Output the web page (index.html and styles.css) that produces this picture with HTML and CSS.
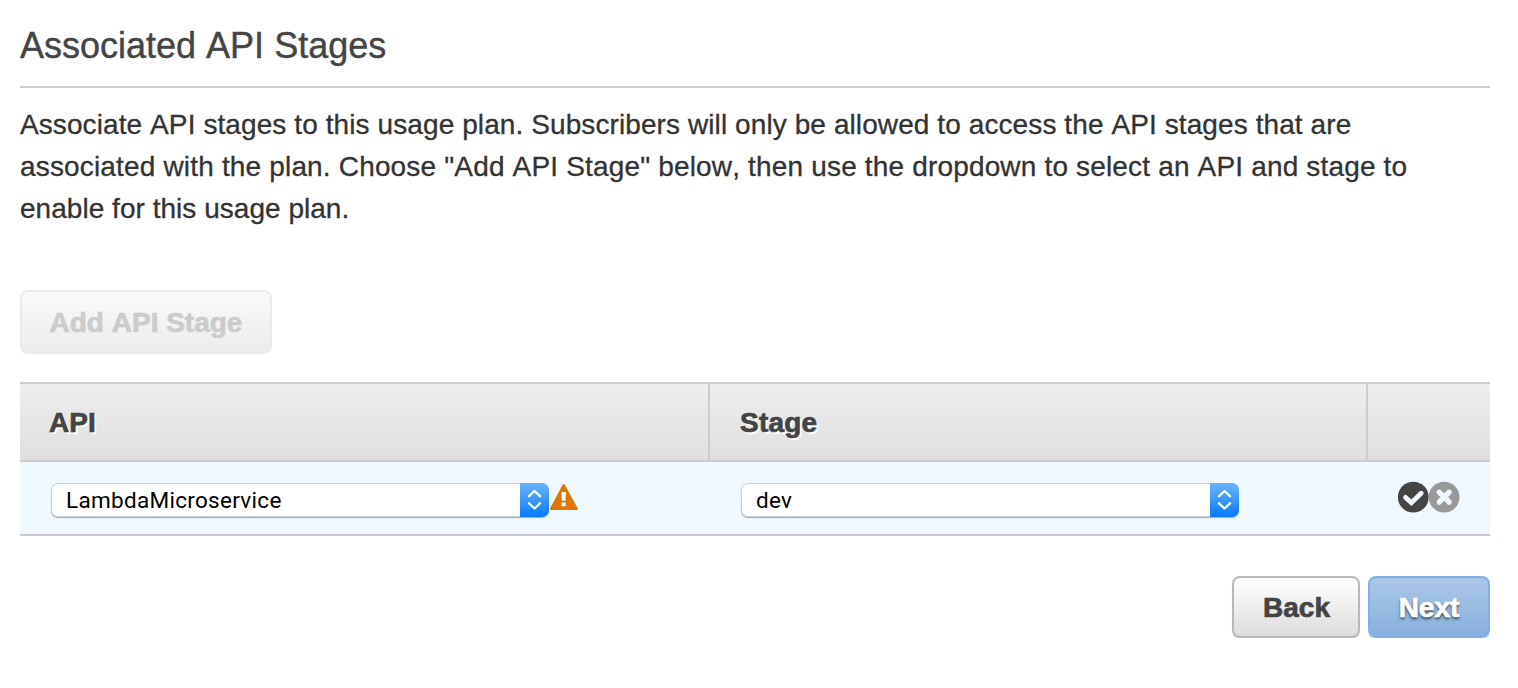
FILE: index.html
```html
<!DOCTYPE html>
<html lang="en">
<head>
<meta charset="utf-8">
<title>Associated API Stages</title>
<link rel="stylesheet" href="styles.css">
</head>
<body>
<main class="page">
  <h1 class="title">Associated API Stages</h1>
  <p class="intro"><span class="line-one">Associate API stages to this usage plan. Subscribers will only be allowed to access the API stages that are</span><br><span class="line-two">associated with the plan. Choose "Add API Stage" below, then use the dropdown to select an API and stage to</span><br><span class="line-three">enable for this usage plan.</span></p>
  <button class="btn btn-add" disabled>Add API Stage</button>
  <section class="table">
    <div class="row head">
      <div class="cell">API</div>
      <div class="cell stage">Stage</div>
      <div class="cell"></div>
    </div>
    <div class="row body">
      <div class="cell">
        <div class="select"><span class="value">LambdaMicroservice</span><span class="arrows"><svg width="29" height="34" viewBox="0 0 29 34"><path d="M9 13.2 14.5 8 20 13.2M9 20.3 14.5 25.5 20 20.3" fill="none" stroke="#fff" stroke-width="2.3" stroke-linecap="round" stroke-linejoin="round"/></svg></span></div>
        <svg class="warning" width="30" height="28" viewBox="0 0 30 28"><path d="M14.7 2.2 27.6 25.8H2.2Z" fill="#df7600" stroke="#df7600" stroke-width="2.4" stroke-linejoin="round"/><path d="M12.4 9H17L16.5 17.8H12.9ZM12.6 19.4H16.8V23.2H12.6Z" fill="#f0f8ff"/></svg>
      </div>
      <div class="cell">
        <div class="select"><span class="value">dev</span><span class="arrows"><svg width="29" height="34" viewBox="0 0 29 34"><path d="M9 13.2 14.5 8 20 13.2M9 20.3 14.5 25.5 20 20.3" fill="none" stroke="#fff" stroke-width="2.3" stroke-linecap="round" stroke-linejoin="round"/></svg></span></div>
      </div>
      <div class="cell actions">
        <svg width="62" height="33" viewBox="0 0 62 33"><circle cx="15.3" cy="16.2" r="15.4" fill="#444"/><path d="M7.6 16.4 13.4 21.8 23.2 12.2" fill="none" stroke="#f0f8ff" stroke-width="4.8" stroke-linecap="round"/><circle cx="46.1" cy="16.2" r="15.4" fill="#999"/><path d="M41.2 11.2 51.2 21.2M51.2 11.2 41.2 21.2" stroke="#f0f8ff" stroke-width="5.2" stroke-linecap="round"/></svg>
      </div>
    </div>
  </section>
  <footer class="footer">
    <button class="btn btn-back">Back</button>
    <button class="btn btn-next">Next</button>
  </footer>
</main>
</body>
</html>
```
FILE: styles.css
```css
* { box-sizing: border-box; }
body { margin: 0; background: #fff; font-family: "Liberation Sans", Arial, sans-serif; font-kerning: none; }
svg { display: block; flex: none; }
.page { width: 1490px; padding-left: 20px; }
.title { margin: 0; height: 88px; padding-top: 25px; border-bottom: 2px solid #ccc; font-size: 36px; line-height: 42px; font-weight: 400; color: #444; white-space: nowrap; -webkit-text-stroke: 0.4px #444; }
.intro { margin: 16px 0 60px; font-size: 28px; line-height: 42px; color: #333; white-space: nowrap; -webkit-text-stroke: 0.3px #333; }
.line-one { letter-spacing: 0.093px; }
.line-two { letter-spacing: 0.167px; }
.line-three { letter-spacing: 0.03px; }
.btn { display: block; padding: 2px 0 0; border: 2px solid; border-radius: 8px; font: bold 28px/1 "Liberation Sans", Arial, sans-serif; font-kerning: none; text-align: center; -webkit-text-stroke: 0.7px; }
.btn-add { width: 252px; height: 64px; padding-top: 1px; border-color: #ebebeb; background: linear-gradient(#fafafa, #ececec); color: #ccc; }
.table { margin-top: 28px; border-top: 2px solid #ccc; }
.row { display: grid; grid-template-columns: 690px 658px 122px; border-bottom: 2px solid #ccc; }
.cell { display: flex; align-items: center; padding-left: 30px; }
.head { height: 78px; background: linear-gradient(#eee, #dfdfdf); font-size: 28px; font-weight: 700; color: #444; text-shadow: 2px 2px 0 #fff; -webkit-text-stroke: 0.7px; }
.head .cell { padding: 1px 0 0 29px; border-right: 2px solid #ccc; }
.head .cell:last-child { border-right: 0; }
.head .stage { padding-left: 30px; letter-spacing: 0.2px; }
.body { height: 74px; background: #f0f8ff; align-items: start; }
.body .cell { padding-top: 21px; align-items: flex-start; }
.select { display: flex; width: 498px; height: 34px; margin-left: 1px; border-radius: 7px; background: #fff; box-shadow: 0 0 0 1px #c7d0d7 inset, 0 1px 1px #9eaab3; overflow: hidden; }
.value { flex: 1; padding-left: 15px; font: 22.5px/34px Roboto, "Noto Sans", sans-serif; letter-spacing: 0.3px; color: #000; }
.arrows { width: 29px; background: linear-gradient(#6cb3fa, #077bff); }
.actions svg { margin-top: -2px; }
.footer { display: flex; justify-content: flex-end; gap: 8px; margin-top: 40px; }
.btn-back { width: 128px; height: 62px; padding-left: 1px; border-color: #b8b8b8; background: linear-gradient(#fff, #dcdcdc); color: #444; box-shadow: 0 2px 1px #e8e8e8; }
.btn-next { width: 122px; height: 62px; border-color: #85afde; background: linear-gradient(#abc8e7, #87b0dd); color: #fff; text-shadow: 0 2px 3px #333; box-shadow: 0 2px 1px #e8e8e8; }
```
